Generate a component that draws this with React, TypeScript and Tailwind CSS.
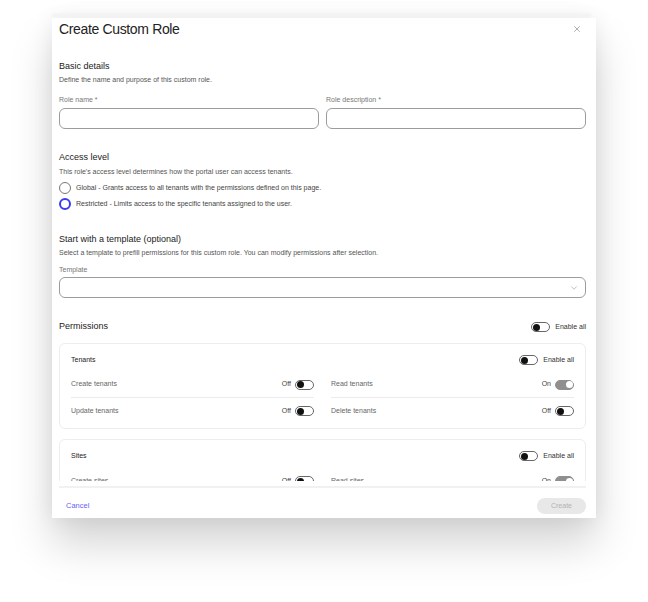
import { ChevronDown, X } from 'lucide-react';

const Toggle = ({ on = false }: { on?: boolean }) => (
  <div
    className={`relative w-[19px] h-[10px] rounded-full border ${
      on ? 'bg-[#8f8f8f] border-[#8f8f8f]' : 'bg-white border-[#666]'
    }`}
  >
    <div
      className={`absolute top-[0.5px] w-[7px] h-[7px] rounded-full ${
        on ? 'right-[0.5px] bg-white' : 'left-[0.5px] bg-[#111]'
      }`}
    />
  </div>
);

const PermRow = ({ label, on, divider }: { label: string; on?: boolean; divider?: boolean }) => (
  <div className={`flex items-center justify-between h-[26px] ${divider ? 'border-b border-[#ebebeb]' : ''}`}>
    <span className="text-[7px] text-[#666]">{label}</span>
    <div className="flex items-center gap-[4px]">
      <span className="text-[7px] text-[#444]">{on ? 'On' : 'Off'}</span>
      <Toggle on={on} />
    </div>
  </div>
);

const PermCard = ({ title, rows }: { title: string; rows: [string, boolean][] }) => (
  <div className="border border-[#ededed] rounded-[6px] px-[11px] pt-[10px] pb-[4px]">
    <div className="flex items-center justify-between h-[12px]">
      <span className="text-[7px] font-medium text-[#222]">{title}</span>
      <div className="flex items-center gap-[5px]">
        <Toggle />
        <span className="text-[7px] text-[#333]">Enable all</span>
      </div>
    </div>
    <div className="grid grid-cols-2 gap-x-[17px] mt-[6px]">
      {rows.map(([label, on], i) => (
        <PermRow key={label} label={label} on={on} divider={i < rows.length - 2} />
      ))}
    </div>
  </div>
);

export default function App() {
  return (
    <div className="w-[648px] h-[602px] bg-white font-['Liberation_Sans',Arial,sans-serif] pt-[14px] pl-[52px]">
      {/* faint blurred edge above the dialog */}
      <div className="w-[538px] h-[3px] mb-[1px] bg-[#f1f1f1] blur-[1px]" />
      <div className="w-[544px] h-[500px] bg-white flex flex-col shadow-[0_26px_40px_0_rgba(0,0,0,0.17),0_0_20px_rgba(0,0,0,0.07)]">
        {/* Header */}
        <div className="h-[22px] flex items-center justify-between pl-[7px] pr-[14px]">
          <h1 className="text-[14px] tracking-tight text-[#222]">Create Custom Role</h1>
          <X className="w-[10px] h-[10px] text-[#777]" strokeWidth={1.4} />
        </div>

        {/* Body */}
        <div className="h-[441px] overflow-hidden pl-[7px] pr-[10px]">
          <div className="mt-[20px] text-[9px] leading-[12px] text-[#222]">Basic details</div>
          <div className="mt-[3px] text-[7px] leading-[10px] text-[#555]">Define the name and purpose of this custom role.</div>
          <div className="grid grid-cols-2 gap-x-[7px] mt-[10px]">
            <div>
              <div className="text-[7px] leading-[10px] text-[#777]">Role name *</div>
              <div className="mt-[3px] h-[21px] border border-[#9c9c9c] rounded-[6px]" />
            </div>
            <div>
              <div className="text-[7px] leading-[10px] text-[#777]">Role description *</div>
              <div className="mt-[3px] h-[21px] border border-[#9c9c9c] rounded-[6px]" />
            </div>
          </div>

          <div className="mt-[22px] text-[9px] leading-[12px] text-[#222]">Access level</div>
          <div className="mt-[4px] text-[7px] leading-[10px] text-[#555]">
            This role's access level determines how the portal user can access tenants.
          </div>
          <div className="mt-[4px] flex items-center gap-[5px] h-[14px]">
            <div className="w-[12px] h-[12px] rounded-full border border-[#777]" />
            <span className="text-[7px] text-[#444]">Global - Grants access to all tenants with the permissions defined on this page.</span>
          </div>
          <div className="mt-[2px] flex items-center gap-[5px] h-[14px]">
            <div className="w-[12px] h-[12px] rounded-full border-[2.5px] border-[#3a3cf2]" />
            <span className="text-[7px] text-[#444]">Restricted - Limits access to the specific tenants assigned to the user.</span>
          </div>

          <div className="mt-[22px] text-[9px] leading-[12px] text-[#222]">Start with a template (optional)</div>
          <div className="mt-[3px] text-[7px] leading-[10px] text-[#555]">
            Select a template to prefill permissions for this custom role. You can modify permissions after selection.
          </div>
          <div className="mt-[7px] text-[7px] leading-[10px] text-[#777]">Template</div>
          <div className="mt-[2px] h-[21px] border border-[#9c9c9c] rounded-[6px] flex items-center justify-end pr-[6px]">
            <ChevronDown className="w-[10px] h-[10px] text-[#999]" strokeWidth={1.5} />
          </div>

          <div className="mt-[23px] flex items-center justify-between h-[12px]">
            <span className="text-[9px] text-[#222]">Permissions</span>
            <div className="flex items-center gap-[5px]">
              <Toggle />
              <span className="text-[7px] text-[#333]">Enable all</span>
            </div>
          </div>

          <div className="mt-[10px] flex flex-col gap-[10px]">
            <PermCard
              title="Tenants"
              rows={[
                ['Create tenants', false],
                ['Read tenants', true],
                ['Update tenants', false],
                ['Delete tenants', false],
              ]}
            />
            <PermCard
              title="Sites"
              rows={[
                ['Create sites', false],
                ['Read sites', true],
              ]}
            />
          </div>
        </div>

        {/* Footer */}
        <div className="mt-[5px] ml-[7px] mr-[10px] border-t-2 border-[#f1f1f1] h-[32px] pt-[6px] flex items-center justify-between">
          <button className="pl-[7px] text-[7.5px] text-[#6b5ff4]">Cancel</button>
          <button className="w-[49px] h-[16px] rounded-full bg-[#e8e8e8] text-[7px] text-[#b3b3b3]">Create</button>
        </div>
      </div>
    </div>
  );
}
